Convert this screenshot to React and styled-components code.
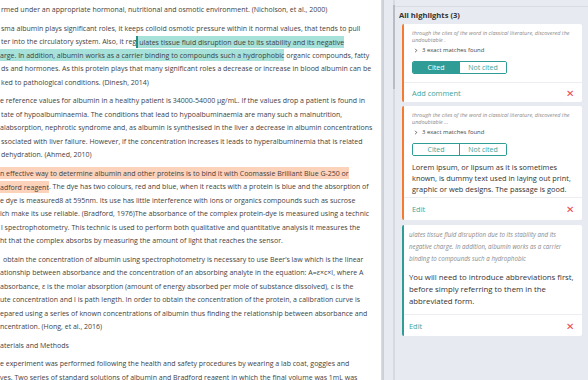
import styled, { createGlobalStyle } from 'styled-components';

const GlobalStyle = createGlobalStyle`
  html, body {
    margin: 0;
    padding: 0;
    background: #ffffff;
  }
  body {
    font-family: "Open Sans", "Liberation Sans", sans-serif;
    overflow: hidden;
  }
`

const colors = {
  text: '#3f3f3f',
  teal: '#2f9d95',
  tealText: '#3aa59c',
  orange: '#f47b2f',
  red: '#ea4a4a',
  panel: '#e7eaf0',
}

const Page = styled.div`
  display: flex;
  width: 588px;
  height: 380px;
  overflow: hidden;
`

const Document = styled.div`
  width: 381px;
  flex-shrink: 0;
  padding-top: 3px;
  background: #fff;
  color: ${colors.text};
  font-size: 7px;
  line-height: 13.5px;
  overflow: hidden;
`

const Paragraph = styled.div`
  margin-bottom: 5px;
`

const Line = styled.span`
  display: block;
  white-space: nowrap;
  padding-left: ${(props) => (props.$indent === undefined ? 1 : props.$indent)}px;
`

const Mark = styled.span`
  background: ${(props) => (props.$tone === 'orange' ? '#fdd2bb' : '#a6e1da')};
  padding: 1.5px 0;
  ${(props) => props.$start && `border-left: 2px solid #278e86; padding-left: 1px;`}
`

const Divider = styled.div`
  width: 3px;
  flex-shrink: 0;
  background: linear-gradient(to right, #d9dce2, #c9ccd3);
`

const Sidebar = styled.div`
  flex: 1;
  display: flex;
  background: ${colors.panel};
`

const Gutter = styled.div`
  width: 9px;
  flex-shrink: 0;
`

const Track = styled.div`
  position: relative;
  width: 2px;
  flex-shrink: 0;
  background: #d7dae1;
`

const Thumb = styled.div`
  position: absolute;
  left: 0;
  top: 5px;
  width: 2px;
  height: 84px;
  background: #b9bcc4;
`

const Column = styled.div`
  flex: 1;
  display: flex;
  flex-direction: column;
  padding-right: 8px;
`

const TopBar = styled.div`
  height: 6px;
  border-bottom: 1px solid #d8dbe2;
  margin-left: -2px;
  margin-right: -8px;
`

const Heading = styled.div`
  font-size: 7.6px;
  font-weight: 700;
  color: #333;
  padding: 3px 0 0 4px;
  height: 17px;
  box-sizing: border-box;
`

const Card = styled.div`
  margin-left: 7px;
  margin-bottom: ${(props) => props.$gap || 5}px;
  background: #fff;
  border-radius: 2px;
  border-left: 2px solid ${(props) => (props.$accent === 'teal' ? colors.teal : colors.orange)};
  display: flex;
  flex-direction: column;
`

const CardBody = styled.div`
  padding: ${(props) => props.$pad || '6px 8px 0 8px'};
  border-bottom: 1px solid #eceef2;
`

const Quote = styled.div`
  font-style: italic;
  font-size: ${(props) => props.$size || 5.45}px;
  line-height: ${(props) => props.$lh || 7}px;
  color: #8a8a8a;
  white-space: nowrap;
`

const Matches = styled.div`
  display: flex;
  align-items: center;
  gap: 4px;
  font-size: 5.9px;
  color: #444;
  height: 12px;
  padding-left: 2px;
`

const Toggle = styled.div`
  display: flex;
  width: 95px;
  height: 13px;
  margin-top: 5px;
  border: 1px solid ${colors.teal};
  border-radius: 2px;
  overflow: hidden;
  box-sizing: border-box;
`

const ToggleButton = styled.div`
  flex: 1;
  display: flex;
  align-items: center;
  justify-content: center;
  font-size: 7px;
  background: ${(props) => (props.$active ? colors.teal : '#fff')};
  color: ${(props) => (props.$active ? '#fff' : colors.tealText)};
  & + & {
    border-left: 1px solid ${colors.teal};
  }
`

const Comment = styled.div`
  font-size: ${(props) => props.$size || 7.4}px;
  line-height: ${(props) => props.$lh || 11}px;
  color: #333;
  margin-top: 6px;
  white-space: nowrap;
`

const Spacer = styled.div`
  height: ${(props) => props.$h}px;
`

const CardFooter = styled.div`
  display: flex;
  align-items: center;
  justify-content: space-between;
  height: ${(props) => props.$h || 19}px;
  padding: 0 8px 0 ${(props) => props.$left || 8}px;
`

const Action = styled.span`
  color: ${colors.tealText};
  font-size: 7.4px;
`

const Close = styled.span`
  color: ${colors.red};
  font-size: 10px;
  line-height: 1;
`

const Chevron = () => (
  <svg width="4" height="5" viewBox="0 0 4 6">
    <path d="M1 1 L3 3 L1 5" fill="none" stroke="#444" strokeWidth="1" />
  </svg>
)

function App() {
  return (
    <Page>
      <GlobalStyle />
      <Document>
        <Paragraph>
          <Line>rmed under an appropriate hormonal, nutritional and osmotic environment. (Nicholson, et al., 2000)</Line>
        </Paragraph>
        <Paragraph>
          <Line>sma albumin plays significant roles, it keeps colloid osmotic pressure within it normal values, that tends to pull</Line>
          <Line>ter into the circulatory system. Also, it reg<Mark $start>ulates tissue fluid disruption due to its stability and its negative</Mark></Line>
          <Line $indent={0}><Mark>arge. In addition, albumin works as a carrier binding to compounds such a hydrophobic</Mark> organic compounds, fatty</Line>
          <Line>ds and hormones. As this protein plays that many significant roles a decrease or increase in blood albumin can be</Line>
          <Line>ked to pathological conditions. (Dinesh, 2014)</Line>
        </Paragraph>
        <Paragraph>
          <Line $indent={0}>e reference values for albumin in a healthy patient is 34000-54000 µg/mL. If the values drop a patient is found in</Line>
          <Line>tate of hypoalbuminaemia. The conditions that lead to hypoalbuminaemia are many such a malnutrition,</Line>
          <Line $indent={0}>alabsorption, nephrotic syndrome and, as albumin is synthesised in the liver a decrease in albumin concentrations</Line>
          <Line>ssociated with liver failure. However, if the concentration increases it leads to hyperalbuminemia that is related</Line>
          <Line>dehydration. (Ahmed, 2010)</Line>
        </Paragraph>
        <Paragraph>
          <Line $indent={0}><Mark $tone="orange">n effective way to determine albumin and other proteins is to bind it with Coomassie Brilliant Blue G-250 or</Mark></Line>
          <Line $indent={0}><Mark $tone="orange">adford reagent</Mark>. The dye has two colours, red and blue, when it reacts with a protein is blue and the absorption of</Line>
          <Line $indent={0}>e dye is measured8 at 595nm. Its use has little interference with ions or organics compounds such as sucrose</Line>
          <Line $indent={0}>ich make its use reliable. (Bradford, 1976)The absorbance of the complex protein-dye is measured using a technic</Line>
          <Line>l spectrophotometry. This technic is used to perform both qualitative and quantitative analysis it measures the</Line>
          <Line $indent={0}>ht that the complex absorbs by measuring the amount of light that reaches the sensor.</Line>
        </Paragraph>
        <Paragraph>
          <Line $indent={3}>obtain the concentration of albumin using spectrophotometry is necessary to use Beer’s law which is the linear</Line>
          <Line $indent={0}>ationship between absorbance and the concentration of an absorbing analyte in the equation: A=ε×c×l, where A</Line>
          <Line $indent={0}>absorbance, ε is the molar absorption (amount of energy absorbed per mole of substance dissolved), c is the</Line>
          <Line $indent={0}>ute concentration and l is path length. In order to obtain the concentration of the protein, a calibration curve is</Line>
          <Line $indent={0}>epared using a series of known concentrations of albumin thus finding the relationship between absorbance and</Line>
          <Line $indent={0}>ncentration. (Hong, et al., 2016)</Line>
        </Paragraph>
        <Paragraph>
          <Line $indent={0}>aterials and Methods</Line>
        </Paragraph>
        <Paragraph>
          <Line $indent={0}>e experiment was performed following the health and safety procedures by wearing a lab coat, goggles and</Line>
          <Line $indent={0}>ves. Two series of standard solutions of albumin and Bradford reagent in which the final volume was 1mL was</Line>
        </Paragraph>
      </Document>
      <Divider />
      <Sidebar>
        <Gutter />
        <Track>
          <Thumb />
        </Track>
        <Column>
          <TopBar />
          <Heading>All highlights (3)</Heading>

          <Card $gap={4}>
            <CardBody>
              <Quote>through the cites of the word in classical literature, discovered the</Quote>
              <Quote>undoubtable .</Quote>
              <Matches><Chevron />3 exact matches found</Matches>
              <Toggle>
                <ToggleButton $active>Cited</ToggleButton>
                <ToggleButton>Not cited</ToggleButton>
              </Toggle>
              <Spacer $h={8} />
            </CardBody>
            <CardFooter $h={19}>
              <Action>Add comment</Action>
              <Close>✕</Close>
            </CardFooter>
          </Card>

          <Card $gap={5}>
            <CardBody>
              <Quote>through the cites of the word in classical literature, discovered the</Quote>
              <Quote>undoubtable ...</Quote>
              <Matches><Chevron />3 exact matches found</Matches>
              <Toggle>
                <ToggleButton>Cited</ToggleButton>
                <ToggleButton>Not cited</ToggleButton>
              </Toggle>
              <Comment>
                Lorem ipsum, or lipsum as it is sometimes<br />
                known, is dummy text used in laying out print,<br />
                graphic or web designs. The passage is good.
              </Comment>
              <Spacer $h={2} />
            </CardBody>
            <CardFooter $h={22}>
              <Action>Edit</Action>
              <Close>✕</Close>
            </CardFooter>
          </Card>

          <Card $accent="teal">
            <CardBody $pad="4px 8px 0 5px">
              <Quote $size={6.2} $lh={12}>ulates tissue fluid disruption due to its stability and its</Quote>
              <Quote $size={6.2} $lh={12}>negative charge. In addition, albumin works as a carrier</Quote>
              <Quote $size={6.2} $lh={12}>binding to compounds such a hydrophobic</Quote>
              <Comment $size={7.8} $lh={12}>
                You will need to introduce abbreviations first,<br />
                before simply referring to them in the<br />
                abbreviated form.
              </Comment>
              <Spacer $h={7} />
            </CardBody>
            <CardFooter $h={21} $left={5}>
              <Action>Edit</Action>
              <Close>✕</Close>
            </CardFooter>
          </Card>
        </Column>
      </Sidebar>
    </Page>
  )
}

export default App
